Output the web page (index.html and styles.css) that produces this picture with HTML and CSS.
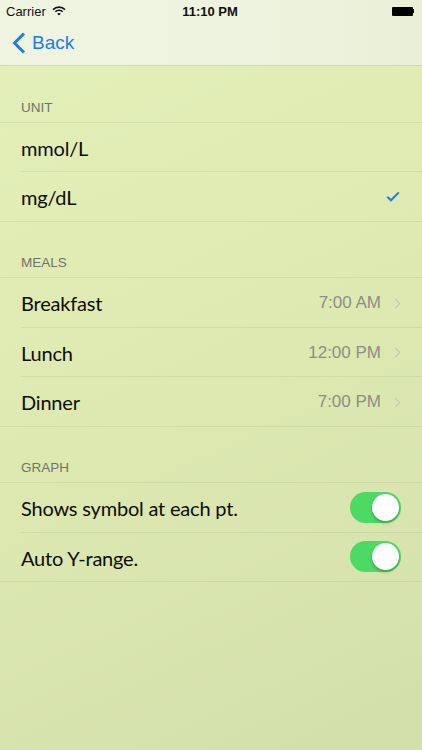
FILE: index.html
```html
<!DOCTYPE html>
<html lang="en">
<head>
  <meta charset="UTF-8">
  <title>Settings</title>
  <link rel="stylesheet" href="styles.css">
</head>
<body>
  <div class="top">
    <div class="status">
      <div class="carrier">Carrier
        <svg class="wifi" width="14" height="10" viewBox="0 0 14 10">
          <path d="M1 3.6 A8.5 8.5 0 0 1 13 3.6" fill="none" stroke="#111" stroke-width="1.6"/>
          <path d="M3.3 5.8 A5.2 5.2 0 0 1 10.7 5.8" fill="none" stroke="#111" stroke-width="1.6"/>
          <path d="M7 9.6 L5.2 7.8 A2.6 2.6 0 0 1 8.8 7.8 Z" fill="#111"/>
        </svg>
      </div>
      <div class="time">11:10 PM</div>
      <div class="battery"><span class="batt-body"></span><span class="batt-nub"></span></div>
    </div>
    <div class="navbar">
      <a class="back">
        <svg width="14" height="22" viewBox="0 0 14 22">
          <path d="M12 1.5 L2.5 11 L12 20.5" fill="none" stroke="#1c7de6" stroke-width="3"/>
        </svg>
        Back
      </a>
    </div>
  </div>

  <div class="section-header">Unit</div>
  <div class="group">
    <div class="row"><div class="cell"><span class="label">mmol/L</span></div></div>
    <div class="row"><div class="cell"><span class="label">mg/dL</span>
      <svg class="check" width="14" height="11" viewBox="0 0 14 11">
        <path d="M1.2 5.8 L5 9.3 L12.8 1.4" fill="none" stroke="#1c7de6" stroke-width="2"/>
      </svg>
    </div></div>
  </div>

  <div class="section-header">Meals</div>
  <div class="group">
    <div class="row"><div class="cell"><span class="label">Breakfast</span><span class="value">7:00 AM</span><span class="chev"></span></div></div>
    <div class="row"><div class="cell"><span class="label">Lunch</span><span class="value">12:00 PM</span><span class="chev"></span></div></div>
    <div class="row"><div class="cell"><span class="label">Dinner</span><span class="value">7:00 PM</span><span class="chev"></span></div></div>
  </div>

  <div class="section-header">Graph</div>
  <div class="group">
    <div class="row"><div class="cell"><span class="label">Shows symbol at each pt.</span><span class="switch on"><span class="knob"></span></span></div></div>
    <div class="row"><div class="cell"><span class="label">Auto Y-range.</span><span class="switch on"><span class="knob"></span></span></div></div>
  </div>
</body>
</html>
```

FILE: styles.css
```css
html, body {
  margin: 0;
  height: 100%;
}
body {
  width: 422px;
  min-height: 750px;
  background: linear-gradient(155deg, #e4f0b9 0%, #dfeab2 45%, #d3dfab 100%);
  font-family: "Liberation Sans", Arial, sans-serif;
  color: #111;
}
.top {
  background: linear-gradient(90deg, #eff4e1, #eef3df 60%, #eaf0d6);
  border-bottom: 1px solid #cfd9b2;
}
.status {
  height: 22px;
  display: flex;
  align-items: center;
  justify-content: space-between;
  padding: 0 8px 0 6px;
  font-size: 13px;
}
.carrier {
  display: flex;
  align-items: center;
  gap: 6px;
  width: 100px;
}
.wifi {
  margin-top: -1px;
}
.time {
  font-weight: bold;
}
.battery {
  width: 100px;
  display: flex;
  justify-content: flex-end;
  align-items: center;
}
.batt-body {
  width: 21px;
  height: 9px;
  background: #000;
  border-radius: 1px;
}
.batt-nub {
  width: 1.5px;
  height: 4px;
  background: #000;
}
.navbar {
  height: 43px;
  display: flex;
  align-items: center;
  padding-left: 12px;
}
.back {
  display: flex;
  align-items: center;
  gap: 6px;
  color: #1c7de6;
  font-size: 19px;
  margin-top: -1px;
}
.section-header {
  height: 56.5px;
  box-sizing: border-box;
  display: flex;
  align-items: flex-end;
  padding: 0 21px 7px;
  font-size: 13.5px;
  text-transform: uppercase;
  color: #70736a;
  border-bottom: 1px solid rgba(130, 140, 90, 0.14);
}
.group {
  border-bottom: 1px solid rgba(130, 140, 90, 0.14);
}
.row {
  padding-left: 21px;
}
.cell {
  height: 48.5px;
  display: flex;
  align-items: center;
  padding-right: 21px;
  border-bottom: 1px solid rgba(130, 140, 90, 0.14);
}
.row:last-child .cell {
  border-bottom: none;
}
.label {
  flex: 1;
  font-family: Lato, "Open Sans", sans-serif;
  font-size: 20px;
  letter-spacing: -0.2px;
  color: #0c0c0a;
  margin-top: 2px;
}
.value {
  font-size: 17px;
  color: #8c8e86;
  margin: 2px 11px 0 0;
}
.chev {
  width: 6px;
  height: 6px;
  border-top: 1.5px solid #c2c7b4;
  border-right: 1.5px solid #c2c7b4;
  transform: rotate(45deg);
  margin: 2px 2px 0 0;
}
.check {
  margin-right: 1px;
}
.switch {
  width: 51px;
  height: 31px;
  border-radius: 16px;
  background: #4cd964;
  display: flex;
  align-items: center;
  justify-content: flex-end;
  padding: 0 2px;
  box-sizing: border-box;
}
.knob {
  width: 27px;
  height: 27px;
  border-radius: 50%;
  background: #fff;
  box-shadow: 0 2px 3px rgba(0, 0, 0, 0.25);
}
```
